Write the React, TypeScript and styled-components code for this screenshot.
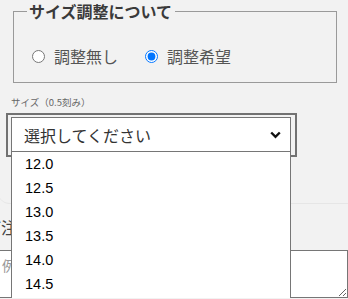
import { useState } from 'react';
import styled, { createGlobalStyle } from 'styled-components';

const GlobalStyle = createGlobalStyle`
  html, body {
    margin: 0;
    background: #f2f2f2;
    overflow: hidden;
  }
  body {
    font-family: "Noto Sans CJK JP", "Noto Sans", sans-serif;
  }
`;

const Page = styled.div`
  position: relative;
  padding-top: 2px;
`;

const Card = styled.div`
  margin-left: -2px;
  padding-left: 2px;
  height: 201px;
  border-bottom: 1px solid #e6e6e6;
  border-bottom-left-radius: 12px;
`;

const FieldSet = styled.fieldset`
  box-sizing: border-box;
  width: 324px;
  margin: 0 0 0 13px;
  padding: 0 12px 14px 13px;
  border: 1px solid #9a9a9a;
`;

const Legend = styled.legend`
  padding: 0 3px 0 2px;
  font-size: 16px;
  line-height: 18px;
  font-weight: 700;
  color: #3a3a3a;
`;

const RadioRow = styled.div`
  display: flex;
  align-items: center;
  gap: 27px;
  height: 24px;
  margin-top: 24px;
  padding-left: 5px;
`;

const RadioLabel = styled.label`
  display: flex;
  align-items: center;
  gap: 9px;
  font-size: 16px;
  color: #555;
`;

const Radio = styled.input`
  width: 13px;
  height: 13px;
  margin: 0;
`;

const SizeLabel = styled.div`
  margin: 13px 0 0 11px;
  font-size: 9.5px;
  line-height: 12px;
  color: #666;
`;

const SelectFrame = styled.div`
  box-sizing: border-box;
  width: 291px;
  height: 44px;
  margin: 5px 0 0 6px;
  padding: 2px 3px;
  border: 2px solid #727272;
`;

const SelectBox = styled.div`
  box-sizing: border-box;
  display: flex;
  align-items: center;
  justify-content: space-between;
  width: 280px;
  height: 36px;
  padding: 0 9px 0 12px;
  background: #fff;
  border: 1px solid #767676;
  font-size: 16px;
  color: #333;
`;

const Options = styled.ul`
  position: absolute;
  left: 11px;
  top: 151px;
  box-sizing: border-box;
  width: 280px;
  margin: 0;
  padding: 0 0 12px;
  list-style: none;
  background: #fff;
  border: 1px solid #767676;
`;

const Option = styled.li`
  height: 24px;
  padding-left: 13px;
  font-family: "Liberation Sans", Arial, sans-serif;
  font-size: 14.5px;
  line-height: 24px;
  color: #000;
`;

const NoteLabel = styled.div`
  margin: 14px 0 0 -15px;
  font-size: 16px;
  line-height: 18px;
  color: #444;
`;

const NoteArea = styled.textarea`
  display: block;
  box-sizing: border-box;
  width: 350px;
  height: 48px;
  margin: 14px 0 0 -2px;
  padding: 4px 3px;
  border: 1px solid #767676;
  background: #fff;
  font-family: "Noto Sans CJK JP", sans-serif;
  font-size: 14px;
  &::placeholder {
    color: #999;
  }
`;

const sizes = ['12.0', '12.5', '13.0', '13.5', '14.0', '14.5'];

export default function App() {
  const [adjust, setAdjust] = useState('yes');

  return (
    <Page>
      <GlobalStyle />
      <Card>
        <FieldSet>
          <Legend>サイズ調整について</Legend>
          <RadioRow>
            <RadioLabel>
              <Radio type="radio" name="adjust" checked={adjust === 'no'} onChange={() => setAdjust('no')} />
              調整無し
            </RadioLabel>
            <RadioLabel>
              <Radio type="radio" name="adjust" checked={adjust === 'yes'} onChange={() => setAdjust('yes')} />
              調整希望
            </RadioLabel>
          </RadioRow>
        </FieldSet>
        <SizeLabel>サイズ（0.5刻み）</SizeLabel>
        <SelectFrame>
          <SelectBox>
            選択してください
            <svg width="11" height="8" viewBox="0 0 11 8">
              <path d="M1.2 1.5 L5.5 5.8 L9.8 1.5" fill="none" stroke="#111" strokeWidth="2.4" />
            </svg>
          </SelectBox>
        </SelectFrame>
      </Card>
      <NoteLabel>ご注文メモ</NoteLabel>
      <NoteArea placeholder="例）サイズについてのご要望" />
      <Options>
        {sizes.map((s) => (
          <Option key={s}>{s}</Option>
        ))}
      </Options>
    </Page>
  );
}
